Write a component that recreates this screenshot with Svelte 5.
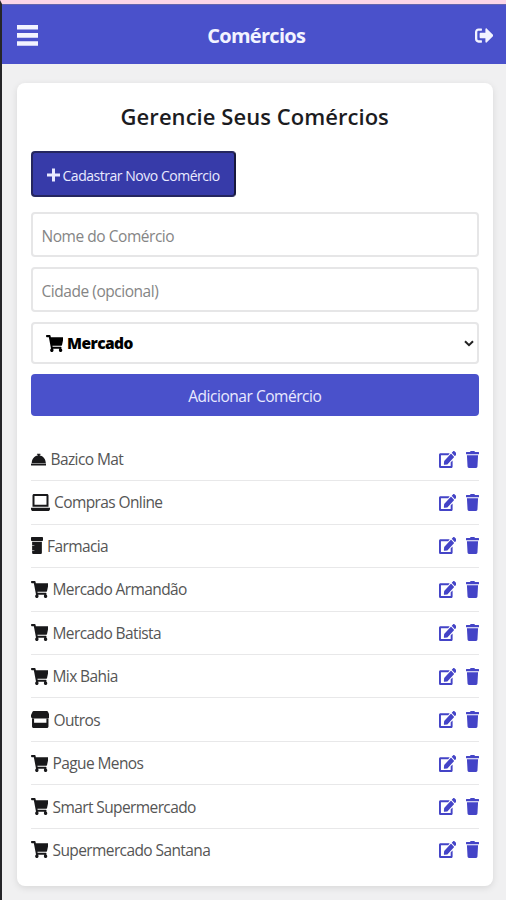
<script>
  const cart =
    'M528.12 301.319l47.273-208C578.806 78.301 567.391 64 551.99 64H159.208l-9.166-44.81C147.758 8.021 137.93 0 126.529 0H24C10.745 0 0 10.745 0 24v16c0 13.255 10.745 24 24 24h69.883l70.248 343.435C147.325 417.1 136 435.222 136 456c0 30.928 25.072 56 56 56s56-25.072 56-56c0-15.674-6.447-29.835-16.824-40h209.647C430.447 426.165 424 440.326 424 456c0 30.928 25.072 56 56 56s56-25.072 56-56c0-22.172-12.888-41.332-31.579-50.405l5.517-24.276c3.413-15.018-8.002-29.319-23.403-29.319H218.117l-6.545-32h293.145c11.206 0 20.92-7.754 23.403-18.681z';
  const icons = {
    cart: { w: 17.5, box: '0 0 576 512', d: cart },
    bell: {
      w: 15.5,
      box: '0 0 512 512',
      d: 'M288 132V116h16c8 0 16-8 16-16s-8-16-16-16h-96c-8 0-16 8-16 16s8 16 16 16h16v16C112 150 24 240 24 360h464c0-120-88-210-200-228zM16 376h480c9 0 16 7 16 16v32c0 9-7 16-16 16H16c-9 0-16-7-16-16v-32c0-9 7-16 16-16z'
    },
    laptop: {
      w: 19,
      box: '0 0 608 512',
      d: 'M96 0h416c27 0 48 21 48 48v336H48V48C48 21 69 0 96 0zM112 60v264h384V60zM0 416h608v32c0 35-29 64-64 64H64c-35 0-64-29-64-64z'
    },
    pharmacy: {
      w: 12,
      box: '0 0 384 512',
      d: 'M24 0h336c13 0 24 11 24 24v72c0 13-11 24-24 24H24C11 120 0 109 0 96V24C0 11 11 0 24 0zM36 140h312v332c0 22-18 40-40 40H76c-22 0-40-18-40-40v-48h72v-16H36V256h72v-16H36z'
    },
    store: {
      w: 18.5,
      box: '0 0 576 512',
      d: 'M80 0h416c12 0 22 6 28 16l48 100c16 46-4 100-44 108H48C8 216-12 162 4 116L52 16C58 6 68 0 80 0zM32 216h64v140h384V216h64v248c0 26-22 48-48 48H80c-26 0-48-22-48-48z'
    }
  };
  const editPath =
    'M402.6 83.2l90.2 90.2c3.8 3.8 3.8 10 0 13.8L274.4 405.6l-92.8 10.3c-12.4 1.4-22.9-9.1-21.5-21.5l10.3-92.8L388.8 83.2c3.8-3.8 10-3.8 13.8 0zm162-22.9l-48.8-48.8c-15.2-15.2-39.9-15.2-55.2 0l-35.4 35.4c-3.8 3.8-3.8 10 0 13.8l90.2 90.2c3.8 3.8 10 3.8 13.8 0l35.4-35.4c15.2-15.3 15.2-40 0-55.2zM384 346.2V448H64V128h229.8c3.2 0 6.2-1.3 8.5-3.5l40-40c7.6-7.6 2.2-20.5-8.5-20.5H48C21.5 64 0 85.5 0 112v352c0 26.5 21.5 48 48 48h352c26.5 0 48-21.5 48-48V306.2c0-10.7-12.9-16-20.5-8.5l-40 40c-2.2 2.3-3.5 5.3-3.5 8.5z';
  const trashPath =
    'M432 32H312l-9.4-18.7A24 24 0 0 0 281.1 0H166.8a23.72 23.72 0 0 0-21.4 13.3L136 32H16A16 16 0 0 0 0 48v32a16 16 0 0 0 16 16h416a16 16 0 0 0 16-16V48a16 16 0 0 0-16-16zM53.2 467a48 48 0 0 0 47.9 45h245.8a48 48 0 0 0 47.9-45L416 128H32z';
  const shops = [
    { name: 'Bazico Mat', icon: 'bell' },
    { name: 'Compras Online', icon: 'laptop' },
    { name: 'Farmacia', icon: 'pharmacy' },
    { name: 'Mercado Armandão', icon: 'cart' },
    { name: 'Mercado Batista', icon: 'cart' },
    { name: 'Mix Bahia', icon: 'cart' },
    { name: 'Outros', icon: 'store' },
    { name: 'Pague Menos', icon: 'cart' },
    { name: 'Smart Supermercado', icon: 'cart' },
    { name: 'Supermercado Santana', icon: 'cart' }
  ];
</script>

<div class="page">
  <header>
    <button class="bare" aria-label="Menu">
      <svg width="21" height="21" viewBox="0 0 21 21"><path d="M0 0h21v4.6H0zM0 8.1h21v4.6H0zM0 16.2h21v4.6H0z" /></svg>
    </button>
    <h1>Comércios</h1>
    <button class="bare" aria-label="Sair">
      <svg width="18.5" height="19" viewBox="0 0 512 512" preserveAspectRatio="none"><path d="M497 273L329 441c-15 15-41 4.500-41-17v-96H152c-13.300 0-24-10.700-24-24v-96c0-13.300 10.700-24 24-24h136V88c0-21.400 25.900-32 41-17l168 168c9.300 9.400 9.300 24.600 0 34zM192 436v-40c0-6.600-5.400-12-12-12H96c-17.700 0-32-14.300-32-32V160c0-17.700 14.300-32 32-32h84c6.600 0 12-5.400 12-12V76c0-6.600-5.400-12-12-12H96c-53 0-96 43-96 96v192c0 53 43 96 96 96h84c6.600 0 12-5.400 12-12z" /></svg>
    </button>
  </header>
  <main>
    <h2>Gerencie Seus Comércios</h2>
    <button class="new">
      <svg width="13" height="14" viewBox="0 0 13 14"><path d="M5 0.500h3v5h5v3H8v5H5v-5H0v-3h5z" /></svg>
      <span>Cadastrar Novo Comércio</span>
    </button>
    <input class="field" placeholder="Nome do Comércio" />
    <input class="field" placeholder="Cidade (opcional)" />
    <div class="select">
      <svg width="17.500" height="17" viewBox={icons.cart.box} preserveAspectRatio="none"><path d={cart} /></svg>
      <span>Mercado</span>
      <svg class="chevron" width="10" height="7" viewBox="0 0 10 7"><path d="M1 1.200l4 4 4-4" /></svg>
    </div>
    <button class="add"><span>Adicionar Comércio</span></button>
    <ul>
      {#each shops as shop}
        <li>
          <svg width={icons[shop.icon].w} height="17" viewBox={icons[shop.icon].box} preserveAspectRatio="none"><path d={icons[shop.icon].d} fill-rule="evenodd" /></svg>
          <span class="name">{shop.name}</span>
          <span class="actions">
            <svg width="17.5" height="17" viewBox="0 0 576 512" preserveAspectRatio="none"><path d={editPath} /></svg>
            <svg width="13" height="17" viewBox="0 0 448 512" preserveAspectRatio="none"><path d={trashPath} /></svg>
          </span>
        </li>
      {/each}
    </ul>
  </main>
</div>

<style>
  :global(body) {
    margin: 0;
    background: #f0f0f1;
  }
  * {
    box-sizing: border-box;
  }
  .page {
    height: 900px;
    overflow: hidden;
    border-top: 4px solid #fbd5e8;
    border-left: 2px solid #252528;
    background: #f0f0f1;
    font-family: 'Open Sans', 'Noto Sans', sans-serif;
    color: #555;
  }
  svg {
    display: block;
    flex: none;
    fill: currentColor;
  }
  button {
    font-family: inherit;
    white-space: nowrap;
  }
  .bare {
    border: 0;
    padding: 0;
    background: none;
    color: #f2f3ff;
  }
  header {
    height: 59.5px;
    padding: 2.5px 12.5px 0 14.5px;
    display: flex;
    align-items: center;
    justify-content: space-between;
    background: #4a51cb;
    border-top: 1px solid #6566ae;
  }
  h1 {
    margin: 0;
    font-size: 20px;
    line-height: 26px;
    font-weight: 700;
    letter-spacing: -0.7px;
    color: #f2f3ff;
  }
  main {
    margin: 19.5px 13px 0 14.5px;
    height: 803px;
    padding: 16px 14px 0;
    background: #fff;
    border-radius: 8px;
    box-shadow: 0 2px 7px rgba(0, 0, 0, 0.1);
  }
  h2 {
    margin: 0 0 19px;
    text-align: center;
    font-size: 22px;
    line-height: 34px;
    height: 33px;
    font-weight: 600;
    letter-spacing: 0.05px;
    color: #1c1c1f;
  }
  .new {
    display: flex;
    align-items: center;
    gap: 3px;
    width: 205px;
    height: 46px;
    padding: 2px 0 0 14px;
    border: 2px solid #25265f;
    border-right-color: #18183c;
    border-radius: 4px;
    background: #373ba9;
    color: #e9eaff;
    font-size: 14px;
    letter-spacing: -0.47px;
  }
  .field {
    display: block;
    width: 100%;
    height: 45px;
    margin: 15px 0 0;
    padding: 2px 9px 0;
    border: 2px solid #e6e6e7;
    border-radius: 4px;
    background: #fff;
    font: 15.5px 'Open Sans', 'Noto Sans', sans-serif;
    letter-spacing: -0.46px;
  }
  .field + .field {
    margin-top: 10px;
  }
  .field::placeholder {
    color: #858585;
    opacity: 1;
  }
  .select {
    display: flex;
    align-items: center;
    height: 42px;
    margin-top: 10px;
    padding: 0 3px 0 13px;
    border: 2px solid #e6e6e7;
    border-radius: 4px;
    color: #000;
    font-size: 15.5px;
    font-weight: 800;
    letter-spacing: -0.55px;
    gap: 4px;
  }
  .chevron {
    margin-left: auto;
    fill: none;
    stroke: #222;
    stroke-width: 2;
  }
  .add {
    display: block;
    width: 100%;
    height: 42px;
    margin-top: 10px;
    padding: 2px 0 0;
    border: 0;
    border-radius: 4px;
    background: #4a51cb;
    color: #e9eaff;
    font-size: 15.5px;
    letter-spacing: -0.46px;
  }
  ul {
    list-style: none;
    margin: 21.8px 0 0;
    padding: 0;
  }
  li {
    display: flex;
    align-items: center;
    height: 43.45px;
    border-bottom: 1.5px solid #e8e8e9;
    font-size: 15.5px;
    letter-spacing: -0.6px;
    color: #555;
  }
  li:last-child {
    border-bottom-color: transparent;
  }
  li > svg {
    color: #18181a;
  }
  .name {
    margin-left: 4.5px;
    white-space: nowrap;
  }
  .actions {
    display: flex;
    gap: 10px;
    margin-left: auto;
    color: #4444c7;
  }
</style>
